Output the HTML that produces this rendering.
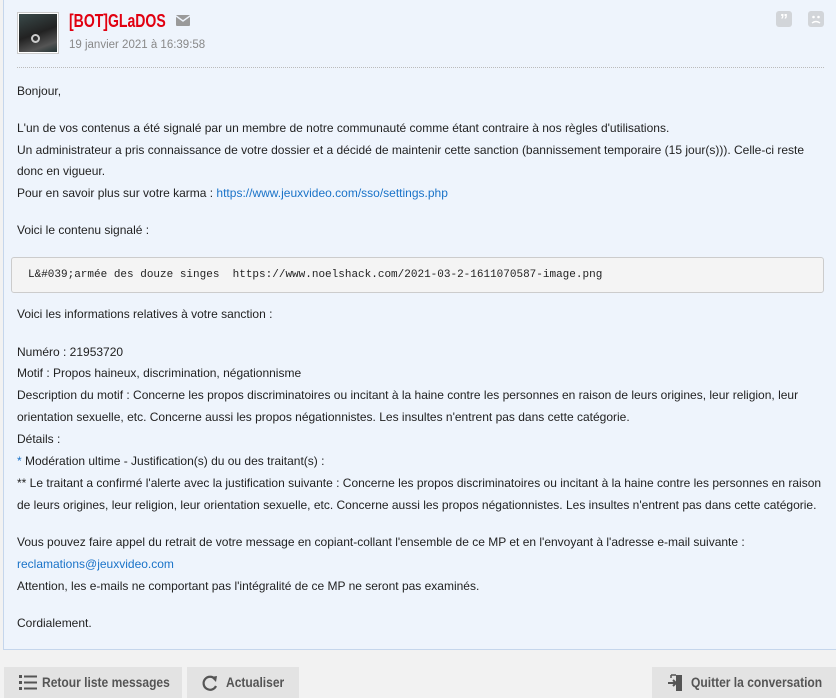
<!DOCTYPE html>
<html><head><meta charset="utf-8"><style>
body{margin:0;width:836px;height:698px;background:#f2f2f2;font-family:"Liberation Sans",Arial,sans-serif;position:relative;overflow:hidden}
.box{position:absolute;left:3px;top:-1px;width:833px;height:651px;background:#eef4fc;border-left:1px solid #c5d6ec;border-bottom:1px solid #c5d6ec;box-sizing:border-box}
.l{position:absolute;left:17px;font-size:12px;line-height:22px;color:#222;white-space:nowrap}
a{color:#1a73c8;text-decoration:none}
.btn{position:absolute;top:667px;height:31px;background:#e3e3e3;font-size:14px;color:#555;line-height:31px;font-weight:bold;white-space:nowrap}
.btn span{transform:scaleX(0.86);transform-origin:left center;display:inline-block}
</style></head><body>
<div class="box"></div>
<div style="position:absolute;left:17px;top:12px;width:42px;height:42px;border:1px solid #ccc;background:#fff;box-sizing:border-box;padding:1px">
<div style="width:100%;height:100%;background:linear-gradient(160deg,#3a4a4a,#222 50%,#555 80%,#233);position:relative"><div style="position:absolute;left:12px;top:20px;width:9px;height:9px;border:2px solid #ccc;border-radius:50%;box-sizing:border-box"></div></div></div>
<div style="position:absolute;left:69px;top:11px;font-weight:bold;font-size:18px;color:#e10010;transform:scaleX(0.78);transform-origin:left top;white-space:nowrap">[BOT]GLaDOS</div>
<svg style="position:absolute;left:176px;top:15px" width="14" height="11"><rect width="14" height="11" rx="1" fill="#9a9a9a"/><path d="M0 1 L7 6 L14 1" stroke="#eef4fc" stroke-width="1.5" fill="none"/></svg>
<div style="position:absolute;left:69px;top:39px;font-size:11.5px;color:#888">19 janvier 2021 à 16:39:58</div>
<div style="position:absolute;left:776px;top:11px;width:16px;height:16px;background:#d2d5d9;border-radius:3px;color:#fff;font-weight:bold;font-size:16px;line-height:20px;text-align:center">”</div>
<svg style="position:absolute;left:808px;top:11px" width="16" height="16"><rect width="16" height="16" rx="3" fill="#d2d5d9"/><circle cx="5.5" cy="6" r="1.3" fill="#fff"/><circle cx="10.5" cy="6" r="1.3" fill="#fff"/><path d="M4 12 Q8 9 12 12" stroke="#fff" stroke-width="1.4" fill="none"/></svg>
<div style="position:absolute;left:17px;top:67px;width:807px;border-top:1px dotted #bbb"></div>
<div class="l" style="top:80px">Bonjour,</div>
<div class="l" style="top:117px">L'un de vos contenus a été signalé par un membre de notre communauté comme étant contraire à nos règles d'utilisations.</div>
<div class="l" style="top:139px">Un administrateur a pris connaissance de votre dossier et a décidé de maintenir cette sanction (bannissement temporaire (15 jour(s))). Celle-ci reste</div>
<div class="l" style="top:160px">donc en vigueur.</div>
<div class="l" style="top:182px">Pour en savoir plus sur votre karma : <a>https://www.jeuxvideo.com/sso/settings.php</a></div>
<div class="l" style="top:219px">Voici le contenu signalé :</div>
<div style="position:absolute;left:11px;top:257px;width:813px;height:36px;background:#f4f4f4;border:1px solid #ccc;border-radius:3px;box-sizing:border-box;font-family:'Liberation Mono',monospace;font-size:11px;line-height:34px;padding-left:16px;color:#222;white-space:pre">L&amp;#039;armée des douze singes  https://www.noelshack.com/2021-03-2-1611070587-image.png</div>
<div class="l" style="top:303px">Voici les informations relatives à votre sanction :</div>
<div class="l" style="top:341px">Numéro : 21953720</div>
<div class="l" style="top:362px">Motif : Propos haineux, discrimination, négationnisme</div>
<div class="l" style="top:384px">Description du motif : Concerne les propos discriminatoires ou incitant à la haine contre les personnes en raison de leurs origines, leur religion, leur</div>
<div class="l" style="top:406px">orientation sexuelle, etc. Concerne aussi les propos négationnistes. Les insultes n'entrent pas dans cette catégorie.</div>
<div class="l" style="top:428px">Détails :</div>
<div class="l" style="top:450px"><span style="color:#1a73c8">*</span> Modération ultime - Justification(s) du ou des traitant(s) :</div>
<div class="l" style="top:472px">** Le traitant a confirmé l'alerte avec la justification suivante : Concerne les propos discriminatoires ou incitant à la haine contre les personnes en raison</div>
<div class="l" style="top:494px">de leurs origines, leur religion, leur orientation sexuelle, etc. Concerne aussi les propos négationnistes. Les insultes n'entrent pas dans cette catégorie.</div>
<div class="l" style="top:531px">Vous pouvez faire appel du retrait de votre message en copiant-collant l'ensemble de ce MP et en l'envoyant à l'adresse e-mail suivante :</div>
<div class="l" style="top:553px"><a>reclamations@jeuxvideo.com</a></div>
<div class="l" style="top:575px">Attention, les e-mails ne comportant pas l'intégralité de ce MP ne seront pas examinés.</div>
<div class="l" style="top:612px">Cordialement.</div>
<div class="btn" style="left:4px;width:178px">
<svg style="position:absolute;left:15px;top:8px" width="18" height="15"><rect x="0" y="0" width="3" height="3" fill="#555"/><rect x="0" y="6" width="3" height="3" fill="#555"/><rect x="0" y="12" width="3" height="3" fill="#555"/><rect x="5" y="0.5" width="13" height="2" fill="#555"/><rect x="5" y="6.5" width="13" height="2" fill="#555"/><rect x="5" y="12.5" width="13" height="2" fill="#555"/></svg>
<span style="position:absolute;left:38px">Retour liste messages</span></div>
<div class="btn" style="left:187px;width:112px">
<svg style="position:absolute;left:14px;top:7px" width="18" height="18"><path d="M14 5 A6.5 6.5 0 1 0 15 12" stroke="#555" stroke-width="2.2" fill="none"/><path d="M10 3 L16 2 L15 8 Z" fill="#555"/></svg>
<span style="position:absolute;left:39px">Actualiser</span></div>
<div class="btn" style="left:652px;width:184px">
<svg style="position:absolute;left:15px;top:7px" width="18" height="18"><rect x="9" y="1" width="6" height="16" fill="#555"/><path d="M1 9 H9 M6 6 L9 9 L6 12" stroke="#555" stroke-width="2" fill="none"/><path d="M4 1 H9 M4 1 V4" stroke="#555" stroke-width="1.5" fill="none"/></svg>
<span style="position:absolute;left:39px">Quitter la conversation</span></div>
</body></html>
